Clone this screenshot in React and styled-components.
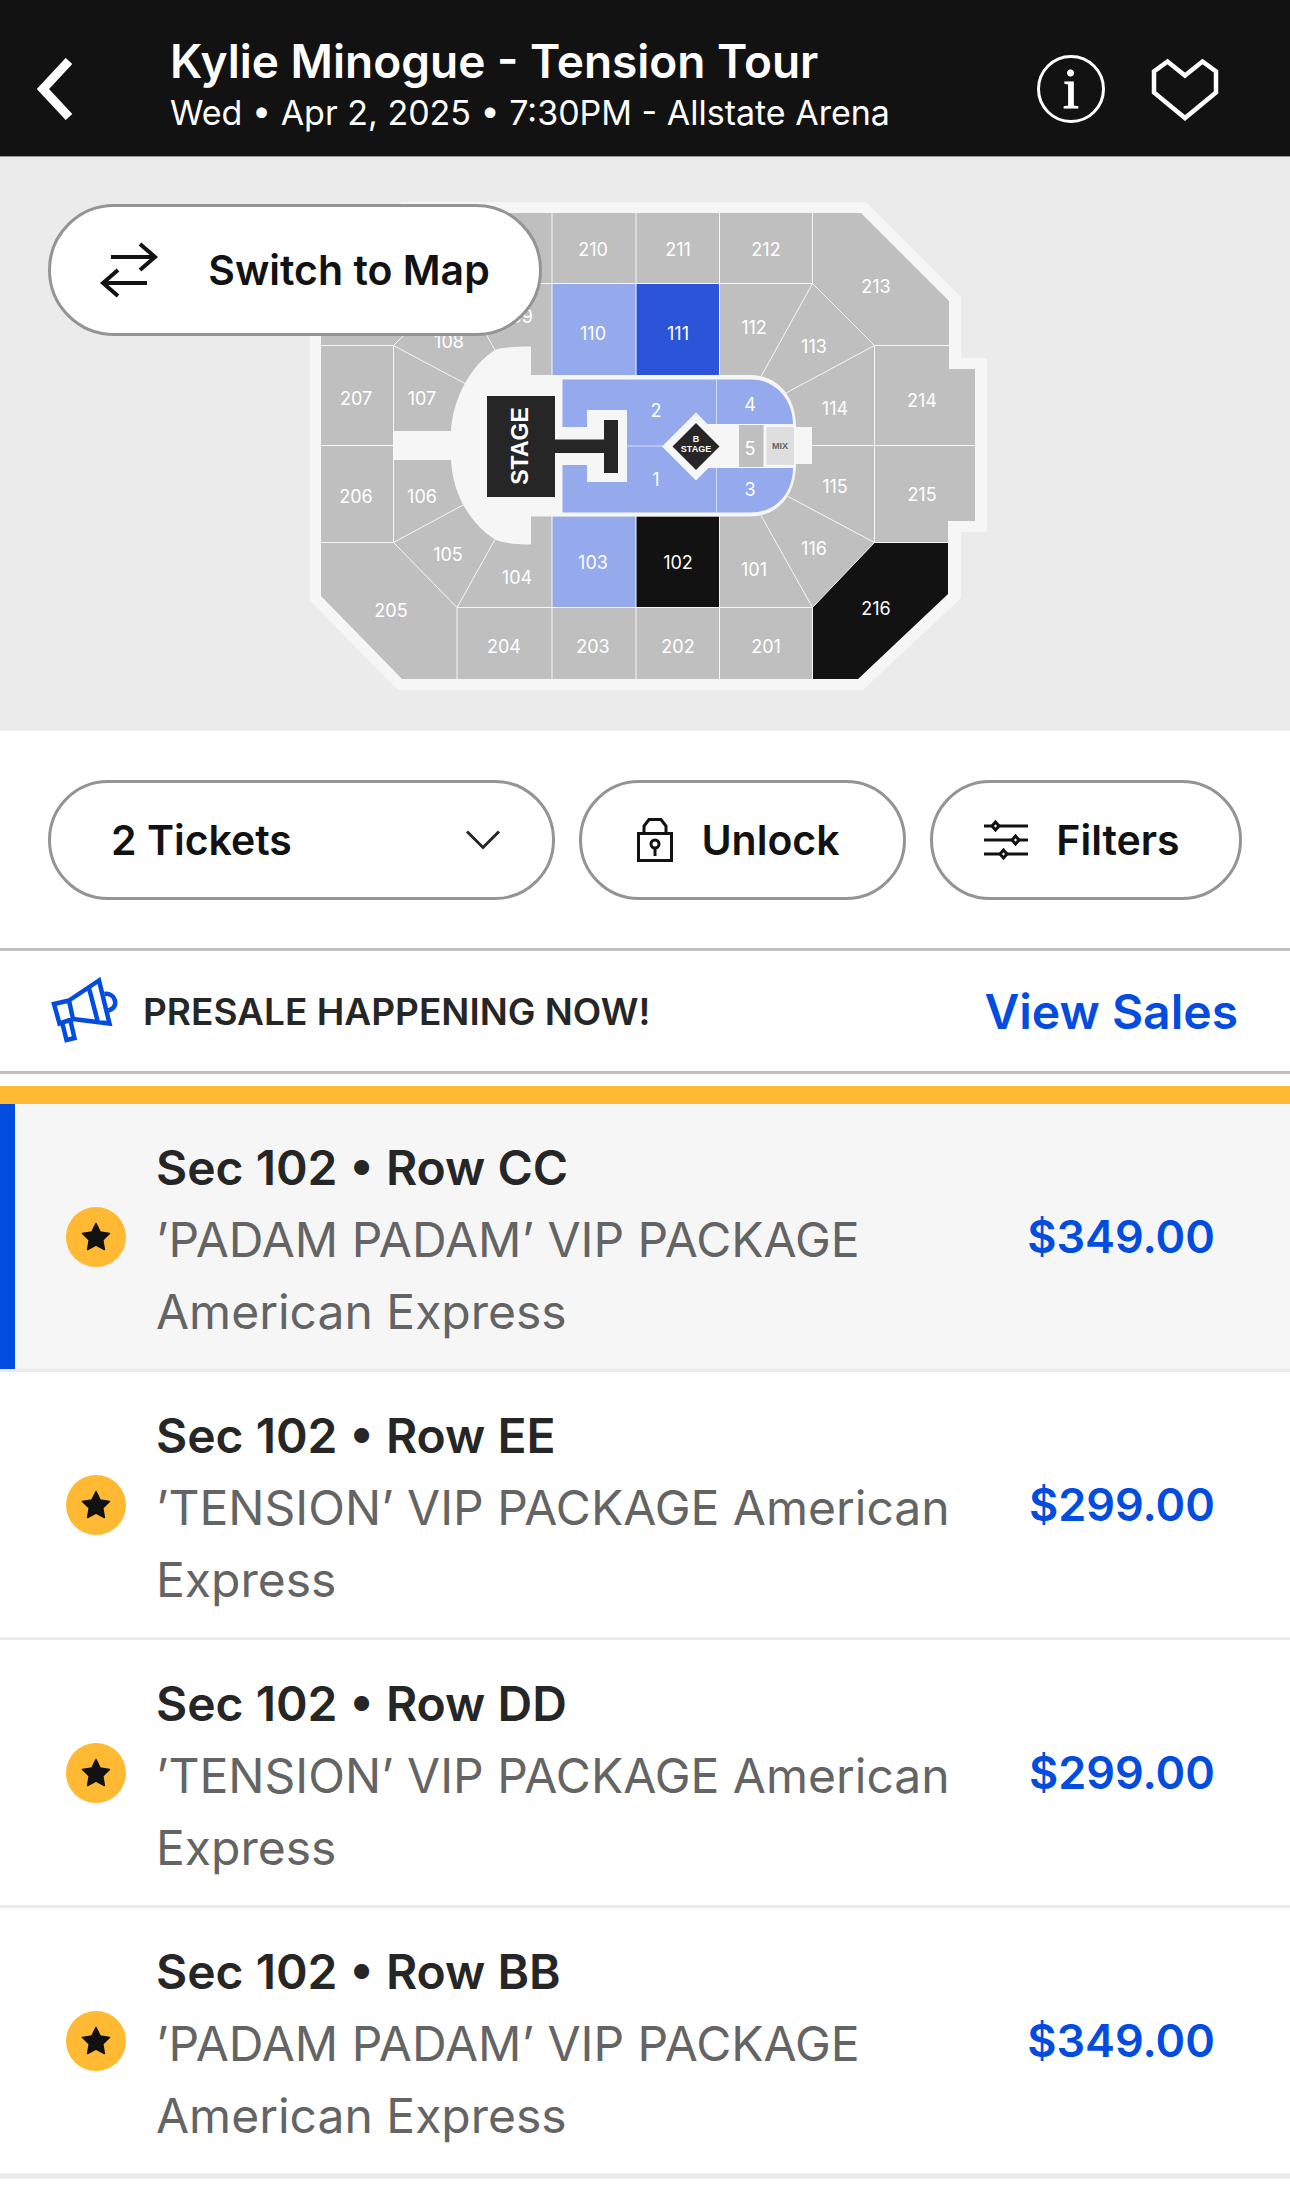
import React, { useState } from 'react'
import styled, { createGlobalStyle } from 'styled-components'

const GlobalStyle = createGlobalStyle`
  * {
    box-sizing: border-box;
  }
  body {
    margin: 0;
    background: #fff;
    color: #262626;
    font-family: Inter, "Liberation Sans", sans-serif;
  }
  button, select {
    font-family: inherit;
    color: inherit;
    cursor: pointer;
  }
  svg {
    display: block;
    flex-shrink: 0;
  }
`

const Header = styled.header`
  display: flex;
  align-items: center;
  padding: 34px 71px 12px 37px;
  border-bottom: 1px solid #949494;
  background: #121212;
  color: #fff;
`

const HeaderText = styled.div`
  flex: 1;
  margin-left: 97px;
  padding-bottom: 6px;
`

const EventTitle = styled.h1`
  margin: 0;
  font-size: 46px;
  line-height: 54px;
  font-weight: 600;
`

const EventDetails = styled.p`
  margin: 0;
  font-size: 34px;
  line-height: 50px;
`

const IconButton = styled.button`
  padding: 0;
  border: 0;
  background: none;

  & + & {
    margin-left: 46px;
  }
`

const MapPanel = styled.section`
  position: relative;
  display: flex;
  justify-content: center;
  padding: 45px 0 41px;
  background: #ebebeb;
`

const SeatMap = styled.svg`
  width: 684px;
  max-width: 100%;
  flex-shrink: 1;
`

const SectionLabel = styled.text`
  fill: #fff;
  font-size: 18px;
  text-anchor: middle;
`

const StageLabel = styled.text`
  fill: ${props => props.$color || '#fff'};
  font-family: "Liberation Sans", Arial, sans-serif;
  font-size: ${props => props.$size}px;
  font-weight: 700;
  text-anchor: middle;
`

const PillButton = styled.button`
  display: flex;
  align-items: center;
  justify-content: center;
  gap: 28px;
  height: 120px;
  padding: 0 8px 0 0;
  border: 3px solid #949494;
  border-radius: 66px;
  background: #fff;
  color: #121212;
  font-size: 41px;
  font-weight: 600;
`

/* floats over the top left corner of the map */
const SwitchButton = styled(PillButton)`
  position: absolute;
  top: 47px;
  left: 48px;
  gap: 50px;
  width: 494px;
  height: 132px;
  padding: 0;
`

const Toolbar = styled.div`
  display: flex;
  gap: 24px;
  padding: 49px 48px 48px;
`

const UnlockButton = styled(PillButton)`
  flex: 0 1 327px;
`

const FiltersButton = styled(PillButton)`
  flex: 0 1 312px;
`

const TicketPicker = styled.label`
  display: grid;
  flex: 1;
  align-items: center;

  > * {
    grid-area: 1 / 1;
  }
  svg {
    justify-self: end;
    margin-right: 54px;
    pointer-events: none;
  }
`

const TicketSelect = styled.select`
  width: 100%;
  height: 120px;
  padding: 0 60px;
  border: 3px solid #949494;
  border-radius: 60px;
  appearance: none;
  background: #fff;
  color: #121212;
  font-size: 41px;
  font-weight: 600;
`

const PresaleBar = styled.div`
  display: flex;
  align-items: center;
  height: 126px;
  padding: 0 52px 0 51px;
  border-top: 3px solid #bfbfbf;
  border-bottom: 3px solid #bfbfbf;
`

const PresaleText = styled.span`
  flex: 1;
  margin-left: 24px;
  font-size: 37px;
  font-weight: 600;
`

const SalesLink = styled.a`
  color: #024ddf;
  font-size: 48px;
  font-weight: 600;
  text-decoration: none;
`

const TicketList = styled.ul`
  margin: 12px 0 0;
  padding: 0;
  border-top: 18px solid #ffb932;
  border-bottom: 3px solid #ebebeb;
  list-style: none;
`

const TicketItem = styled.li`
  border-bottom: 3px solid #ebebeb;
`

const TicketButton = styled.button`
  display: flex;
  align-items: center;
  width: 100%;
  padding: 0 75px 0 51px;
  border: 0;
  border-left: 15px solid ${props => (props.$selected ? '#024ddf' : 'transparent')};
  background: ${props => (props.$selected ? '#f6f6f6' : '#fff')};
  text-align: left;
`

const TicketInfo = styled.span`
  flex: 1;
  padding: 28px 60px 21px 30px;
  color: #646464;
  font-size: 48px;
  line-height: 72px;
`

const Seat = styled.strong`
  display: block;
  color: #262626;
  font-weight: 600;
`

const Price = styled.span`
  color: #024ddf;
  font-size: 45px;
  font-weight: 600;
`

const SECTIONS = [
  ['209', 201, 48], ['210', 290, 48], ['211', 375, 48], ['212', 463, 48], ['213', 573, 85],
  ['214', 619, 199], ['215', 619, 293], ['216', 573, 407], ['201', 463, 445], ['202', 375, 445],
  ['203', 290, 445], ['204', 201, 445], ['205', 88, 409], ['206', 53, 295], ['207', 53, 197],
  ['101', 451, 368], ['102', 375, 361], ['103', 290, 361], ['104', 214, 376], ['105', 145, 353],
  ['106', 119, 295], ['107', 119, 197], ['108', 146, 140], ['109', 215, 115], ['110', 290, 132],
  ['111', 375, 132], ['112', 451, 126], ['113', 511, 145], ['114', 532, 207], ['115', 532, 285],
  ['116', 511, 347], ['1', 353, 278], ['2', 353, 209], ['3', 447, 288], ['4', 447, 203],
  ['5', 447, 247],
]

const TICKETS = [
  { id: 1, seat: 'Sec 102 • Row CC', offer: '’PADAM PADAM’ VIP PACKAGE American Express', price: '$349.00' },
  { id: 2, seat: 'Sec 102 • Row EE', offer: '’TENSION’ VIP PACKAGE American Express', price: '$299.00' },
  { id: 3, seat: 'Sec 102 • Row DD', offer: '’TENSION’ VIP PACKAGE American Express', price: '$299.00' },
  { id: 4, seat: 'Sec 102 • Row BB', offer: '’PADAM PADAM’ VIP PACKAGE American Express', price: '$349.00' },
]

const BackIcon = () => (
  <svg width="36" height="62" viewBox="0 0 36 62" fill="none" stroke="#fff" strokeWidth="9">
    <path d="M32 3L6 31l26 28" />
  </svg>
)

const InfoIcon = () => (
  <svg width="68" height="68" viewBox="0 0 68 68">
    <circle cx="34" cy="34" r="32.5" fill="none" stroke="#fff" strokeWidth="3" />
    <text
      x="34"
      y="53"
      fill="#fff"
      stroke="#fff"
      fontFamily="Liberation Serif, serif"
      fontSize="57"
      textAnchor="middle"
    >
      i
    </text>
  </svg>
)

const HeartIcon = () => (
  <svg width="68" height="68" viewBox="0 0 68 68" fill="none" stroke="#fff" strokeWidth="4.500">
    <path d="M34 20.500L51.500 6.500 65 16.500V37.500L34 63 3 37.500V16.500L16.500 6.500z" />
  </svg>
)

const SwapIcon = () => (
  <svg width="58" height="56" viewBox="0 0 58 56" fill="none" stroke="#121212" strokeWidth="4">
    <path d="M11 15h44M40 2l15 13-15 13M47 41H3M18 28L3 41l15 13" />
  </svg>
)

const ChevronIcon = () => (
  <svg width="36" height="20" viewBox="0 0 36 20" fill="none" stroke="#262626" strokeWidth="3">
    <path d="M2 1.500l16 16 16-16" />
  </svg>
)

const LockIcon = () => (
  <svg width="36" height="46" viewBox="0 0 36 46" fill="none" stroke="#121212" strokeWidth="3">
    <path d="M1.500 16.500h33v27h-33zM7 16V9l5-6.500h12L29 9v7" />
    <circle cx="18" cy="27" r="4" />
    <path d="M18 31v8" />
  </svg>
)

const FiltersIcon = () => (
  <svg width="44" height="42" viewBox="0 0 44 42" fill="none" stroke="#121212" strokeWidth="3">
    <path d="M0 7h8M15 7h29M0 21h28M35 21h9M0 35h16M23 35h21" />
    <path d="M11.500 3l3.500 4-3.500 4L8 7zM31.500 17l3.500 4-3.500 4-3.500-4zM19.500 31l3.500 4-3.500 4-3.500-4z" />
  </svg>
)

const MegaphoneIcon = () => (
  <svg width="68" height="68" viewBox="0 0 68 68" fill="none" stroke="#024ddf" strokeWidth="4.500">
    <path d="M18 23.500L48 3.500l10.500 43L22 42M18 23.500L3 27l5.500 19.500L22 42zM38 11l9 34.500" />
    <path d="M11.500 47L15.500 63l8-2-4-17M53.500 17c5-1 9.500 2 10.500 7s-1.500 8-6.500 9.500" />
  </svg>
)

const StarBadge = () => (
  <svg width="60" height="60" viewBox="0 0 60 60">
    <circle cx="30" cy="30" r="30" fill="#ffb932" />
    <path
      d="M30 16.500l4.200 8.500 9.300 1.400-6.700 6.600 1.600 9.500-8.400-4.500-8.400 4.500 1.600-9.500-6.700-6.600 9.300-1.400z"
      fill="#121212"
      stroke="#121212"
      strokeWidth="1.500"
      strokeLinejoin="round"
    />
  </svg>
)

const ArenaMap = () => (
  <SeatMap viewBox="0 0 684 488" role="img" aria-label="Seat map">
    <path
      d="M99 0H563L658 95V156H684V330H658V396L560 488H95L7 399V89z"
      fill="#f6f6f6"
    />
    <path
      d="M102 11H558L646 99V167H672V319H645V392L555 477H99L18 394V95z"
      fill="#bfbfbf"
    />
    <path d="M249 81.500h84V173h-84zM249 314.500h84v91h-84z" fill="#95a9ed" />
    <path d="M333 81.500h83.500V173H333z" fill="#2b54d9" />
    <path d="M333 314.500h83.500v91H333zM571.500 340.500H645V392L555 477H509.500V405.500z" fill="#121212" />

    {/* section borders */}
    <path
      d="M154 81.500H509.500M154 405.500H509.500M154 11V81.500M154 405.500V477M249 11V173M249 314V477
        M333 11V173M333 314V477M416.500 11V173M416.500 314V477M509.500 11V81.500M509.500 405.500V477
        M18 143.500H90.500V340.500H18M18 243.500H90.500M154 81.500L90.500 143.500 162 181.500M154 81.500L192 148
        M161 302.500L90.500 340.500 154 405.500 192 337.500M458 174.500L509.500 81.500 571.500 143.500 483 191
        M458 313.500L509.500 405.500 571.500 340.500 485 294.500M646 143.500H571.500V340.500H645M509 243.500H672"
      fill="none"
      stroke="#f6f6f6"
      strokeWidth="1"
    />

    <path
      d="M228 173H447C476 173 493 196 493 225H509V262H493C493 292 476 314.500 447 314.500H228V342.500
        C212 342.500 200 341 192 337.500C168 322 150 294 148 258H90.500V229H148C150 196 168 163 192 148
        C200 145 214 144.500 228 144.500z"
      fill="#f6f6f6"
    />

    {/* floor */}
    <path
      d="M259.500 177.500H448C474 177.500 490 199 490 222H404V266H490C490 290 474 310.500 448 310.500H259.500
        V263H284V280H324V208H284V225H259.500z"
      fill="#95a9ed"
    />
    <path d="M324 244H360M413.500 177.500V222M413.500 266V310.500" stroke="#d5ddf8" />
    <path d="M393 210.500L427 244.500 393 278.500 359 244.500z" fill="#f6f6f6" />
    <path d="M404 222.500h89v43h-89z" fill="#f6f6f6" />
    <path d="M436 223h24.500v42H436z" fill="#bfbfbf" />
    <path d="M463.500 225H491v38h-27.500z" fill="#dedede" />
    <path d="M393 221l23.500 23.500L393 268l-23.500-23.500z" fill="#262626" />
    <path d="M184 194H252V237.500H301V218H315V271H301V251H252V295H184z" fill="#262626" />

    {SECTIONS.map(([name, x, y]) => (
      <SectionLabel key={name} x={x} y={y + 6}>{name}</SectionLabel>
    ))}
    <StageLabel $size={23} transform="translate(225 244) rotate(-90)">STAGE</StageLabel>
    <StageLabel $size={9} x="393" y="240">B</StageLabel>
    <StageLabel $size={9} x="393" y="250">STAGE</StageLabel>
    <StageLabel $size={9} $color="#646464" x="477" y="247">MIX</StageLabel>
  </SeatMap>
)

const App = () => {
  const [selected, setSelected] = useState(1)

  return (
    <>
      <GlobalStyle />
      <Header>
        <IconButton aria-label="Back"><BackIcon /></IconButton>
        <HeaderText>
          <EventTitle>Kylie Minogue - Tension Tour</EventTitle>
          <EventDetails>Wed • Apr 2, 2025 • 7:30PM - Allstate Arena</EventDetails>
        </HeaderText>
        <IconButton aria-label="Event info"><InfoIcon /></IconButton>
        <IconButton aria-label="Favorite"><HeartIcon /></IconButton>
      </Header>
      <main>
        <MapPanel>
          <ArenaMap />
          <SwitchButton>
            <SwapIcon />
            Switch to Map
          </SwitchButton>
        </MapPanel>
        <Toolbar>
          <TicketPicker>
            <TicketSelect aria-label="Number of tickets" defaultValue="2">
              <option value="1">1 Ticket</option>
              <option value="2">2 Tickets</option>
              <option value="3">3 Tickets</option>
              <option value="4">4 Tickets</option>
            </TicketSelect>
            <ChevronIcon />
          </TicketPicker>
          <UnlockButton>
            <LockIcon />
            Unlock
          </UnlockButton>
          <FiltersButton>
            <FiltersIcon />
            Filters
          </FiltersButton>
        </Toolbar>
        <PresaleBar>
          <MegaphoneIcon />
          <PresaleText>PRESALE HAPPENING NOW!</PresaleText>
          <SalesLink href="#sales">View Sales</SalesLink>
        </PresaleBar>
        <TicketList>
          {TICKETS.map(ticket => (
            <TicketItem key={ticket.id}>
              <TicketButton
                $selected={ticket.id === selected}
                onClick={() => setSelected(ticket.id)}
              >
                <StarBadge />
                <TicketInfo>
                  <Seat>{ticket.seat}</Seat>
                  {ticket.offer}
                </TicketInfo>
                <Price>{ticket.price}</Price>
              </TicketButton>
            </TicketItem>
          ))}
        </TicketList>
      </main>
    </>
  )
}

export default App
